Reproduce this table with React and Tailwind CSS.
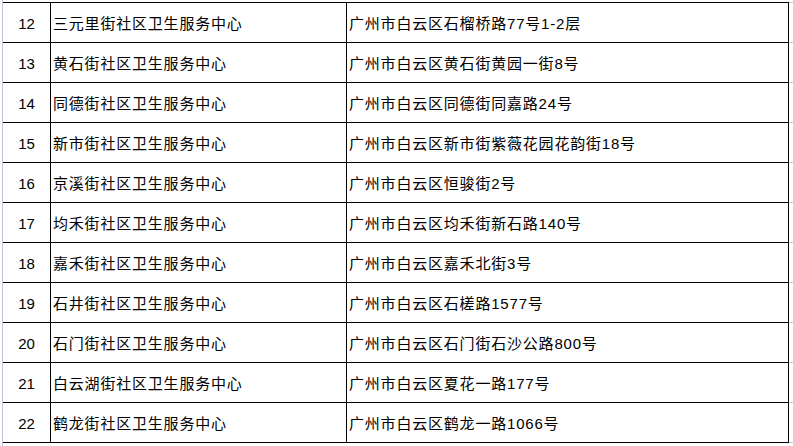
import React from 'react'

const rows = [
  ['12', '三元里街社区卫生服务中心', '广州市白云区石榴桥路77号1-2层'],
  ['13', '黄石街社区卫生服务中心', '广州市白云区黄石街黄园一街8号'],
  ['14', '同德街社区卫生服务中心', '广州市白云区同德街同嘉路24号'],
  ['15', '新市街社区卫生服务中心', '广州市白云区新市街紫薇花园花韵街18号'],
  ['16', '京溪街社区卫生服务中心', '广州市白云区恒骏街2号'],
  ['17', '均禾街社区卫生服务中心', '广州市白云区均禾街新石路140号'],
  ['18', '嘉禾街社区卫生服务中心', '广州市白云区嘉禾北街3号'],
  ['19', '石井街社区卫生服务中心', '广州市白云区石槎路1577号'],
  ['20', '石门街社区卫生服务中心', '广州市白云区石门街石沙公路800号'],
  ['21', '白云湖街社区卫生服务中心', '广州市白云区夏花一路177号'],
  ['22', '鹤龙街社区卫生服务中心', '广州市白云区鹤龙一路1066号'],
]

const font = { fontFamily: '"Liberation Sans", "Noto Sans CJK SC", sans-serif' }

export default function App() {
  return (
    <div className="w-[793px] h-[446px] bg-white overflow-hidden flex text-black text-[15px] tracking-[0.8px]" style={font}>
      <div className="w-[2px] shrink-0" />
      <div className="w-px shrink-0 bg-[#b9c1d4]" />
      <div className="flex flex-col pt-[2px]">
        {/* top rule */}
        <div className="flex h-px">
          <div className="w-[786px] bg-black" />
          <div className="w-[4px] bg-[#c3cadb]" />
        </div>
        {rows.map(([no, name, addr]) => (
          <div key={no} className="flex h-[40px]">
            <div className="w-[47px] border-b border-black flex items-center justify-center pt-[3px] tracking-normal">
              {no}
            </div>
            <div className="w-[296px] border-l border-b border-black flex items-center pl-[2px] pt-[3px] whitespace-nowrap">
              {name}
            </div>
            <div className="w-[443px] border-l border-r border-b border-black flex items-center pl-[2px] pt-[3px] whitespace-nowrap">
              {addr}
            </div>
            <div className="w-[4px] border-b border-[#c3cadb]" />
          </div>
        ))}
      </div>
    </div>
  )
}
